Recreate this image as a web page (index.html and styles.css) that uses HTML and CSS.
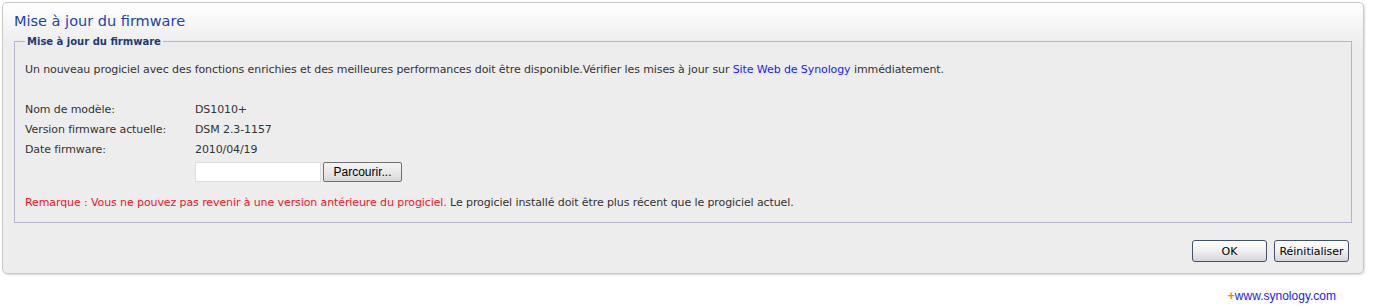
FILE: index.html
```html
<!DOCTYPE html>
<html>
<head>
  <title>Mise à jour du firmware</title>
<link rel="stylesheet" href="styles.css">
</head>

<body>

<div class='panel'>
  <h1 class='title'>Mise à jour du firmware</h1>
  <fieldset class='box'>
    <legend>Mise à jour du firmware</legend>
    <p class='intro'>Un nouveau progiciel avec des fonctions enrichies et des meilleures performances doit être disponible.Vérifier les mises à jour sur <a href='#'>Site Web de Synology</a> immédiatement.</p>
    <div class='info'>
      <span>Nom de modèle:</span><span>DS1010+</span>
      <span>Version firmware actuelle:</span><span>DSM 2.3-1157</span>
      <span>Date firmware:</span><span>2010/04/19</span>
      <span></span>
      <div class='file'><input type='text' class='path'><button class='browse'>Parcourir...</button></div>
    </div>
    <p class='note'><span class='warn'>Remarque : Vous ne pouvez pas revenir à une version antérieure du progiciel.</span> Le progiciel installé doit être plus récent que le progiciel actuel.</p>
  </fieldset>
  <div class='actions'>
    <button class='btn'>OK</button>
    <button class='btn'>Réinitialiser</button>
  </div>
</div>
<div class='footer'><span class='plus'>+</span><a href='#'>www.synology.com</a></div>

</body>
</html>
```

FILE: styles.css
```css
html, body {
  background: #fff;
}
body {
  font-family: 'DejaVu Sans', Tahoma, sans-serif;
  font-size: 11px;
  color: #333;
  margin: 0;
  padding: 2px 13px 0 2px;
}
.panel {
  border: 1px solid #c8c8c8;
  border-radius: 5px;
  background: linear-gradient(#fff, #ededed 40px, #ededed);
  box-shadow: 1px 1px 2px rgba(0,0,0,0.15);
  padding: 0 11px 10px 11px;
  box-sizing: border-box;
  height: 272px;
}
.title {
  font-family: 'DejaVu Sans', Tahoma, sans-serif;
  font-weight: normal;
  font-size: 14.5px;
  color: #1d45a8;
  margin: 0;
  padding: 10px 0 0 0;
  height: 33px;
  box-sizing: border-box;
}
.box {
  border: 1px solid #b4b4cc;
  margin: 0;
  padding: 0 10px;
  height: 187px;
  box-sizing: border-box;
  letter-spacing: -0.1px;
}
.box legend {
  font-size: 10px;
  font-weight: bold;
  color: #1d3a7a;
  padding: 0 2px;
  margin-left: 0;
  letter-spacing: 0;
}
.intro {
  margin: 16px 0 27px 0;
}
.intro a {
  color: #1a1aff;
  text-decoration: none;
}
.info {
  display: grid;
  grid-template-columns: 170px auto;
  row-gap: 6px;
  line-height: 14px;
}
.file {
  display: flex;
  gap: 2px;
  margin-top: -1px;
}
.path {
  width: 126px;
  height: 20px;
  box-sizing: border-box;
  border: 1px solid #ddd;
  background: #fff;
  margin: 0;
}
.browse {
  font-family: 'Liberation Sans', Arial, sans-serif;
  font-size: 12px;
  color: #000;
  width: 79px;
  height: 20px;
  border: 1px solid #707070;
  border-radius: 2px;
  background: linear-gradient(#f4f4f4, #e8e8e8 50%, #d8d8d8);
  padding: 0;
}
.note {
  margin: 14px 0 0 0;
}
.warn {
  color: #f0162a;
}
.actions {
  display: flex;
  justify-content: flex-end;
  gap: 7px;
  margin-top: 17px;
  padding-right: 3px;
}
.btn {
  font-family: 'DejaVu Sans', Tahoma, sans-serif;
  font-size: 11px;
  color: #000;
  width: 75px;
  height: 22px;
  border: 1px solid #40526b;
  border-radius: 3px;
  background: linear-gradient(#fff, #f0f0f0 50%, #d4d4dc);
  padding: 0;
}
.footer {
  text-align: right;
  padding: 15px 28px 0 0;
  font-family: 'Liberation Sans', Arial, sans-serif;
  font-size: 12px;
}
.plus {
  color: #ff7a00;
  font-weight: bold;
}
.footer a {
  color: #1a1aff;
  text-decoration: none;
}
```
